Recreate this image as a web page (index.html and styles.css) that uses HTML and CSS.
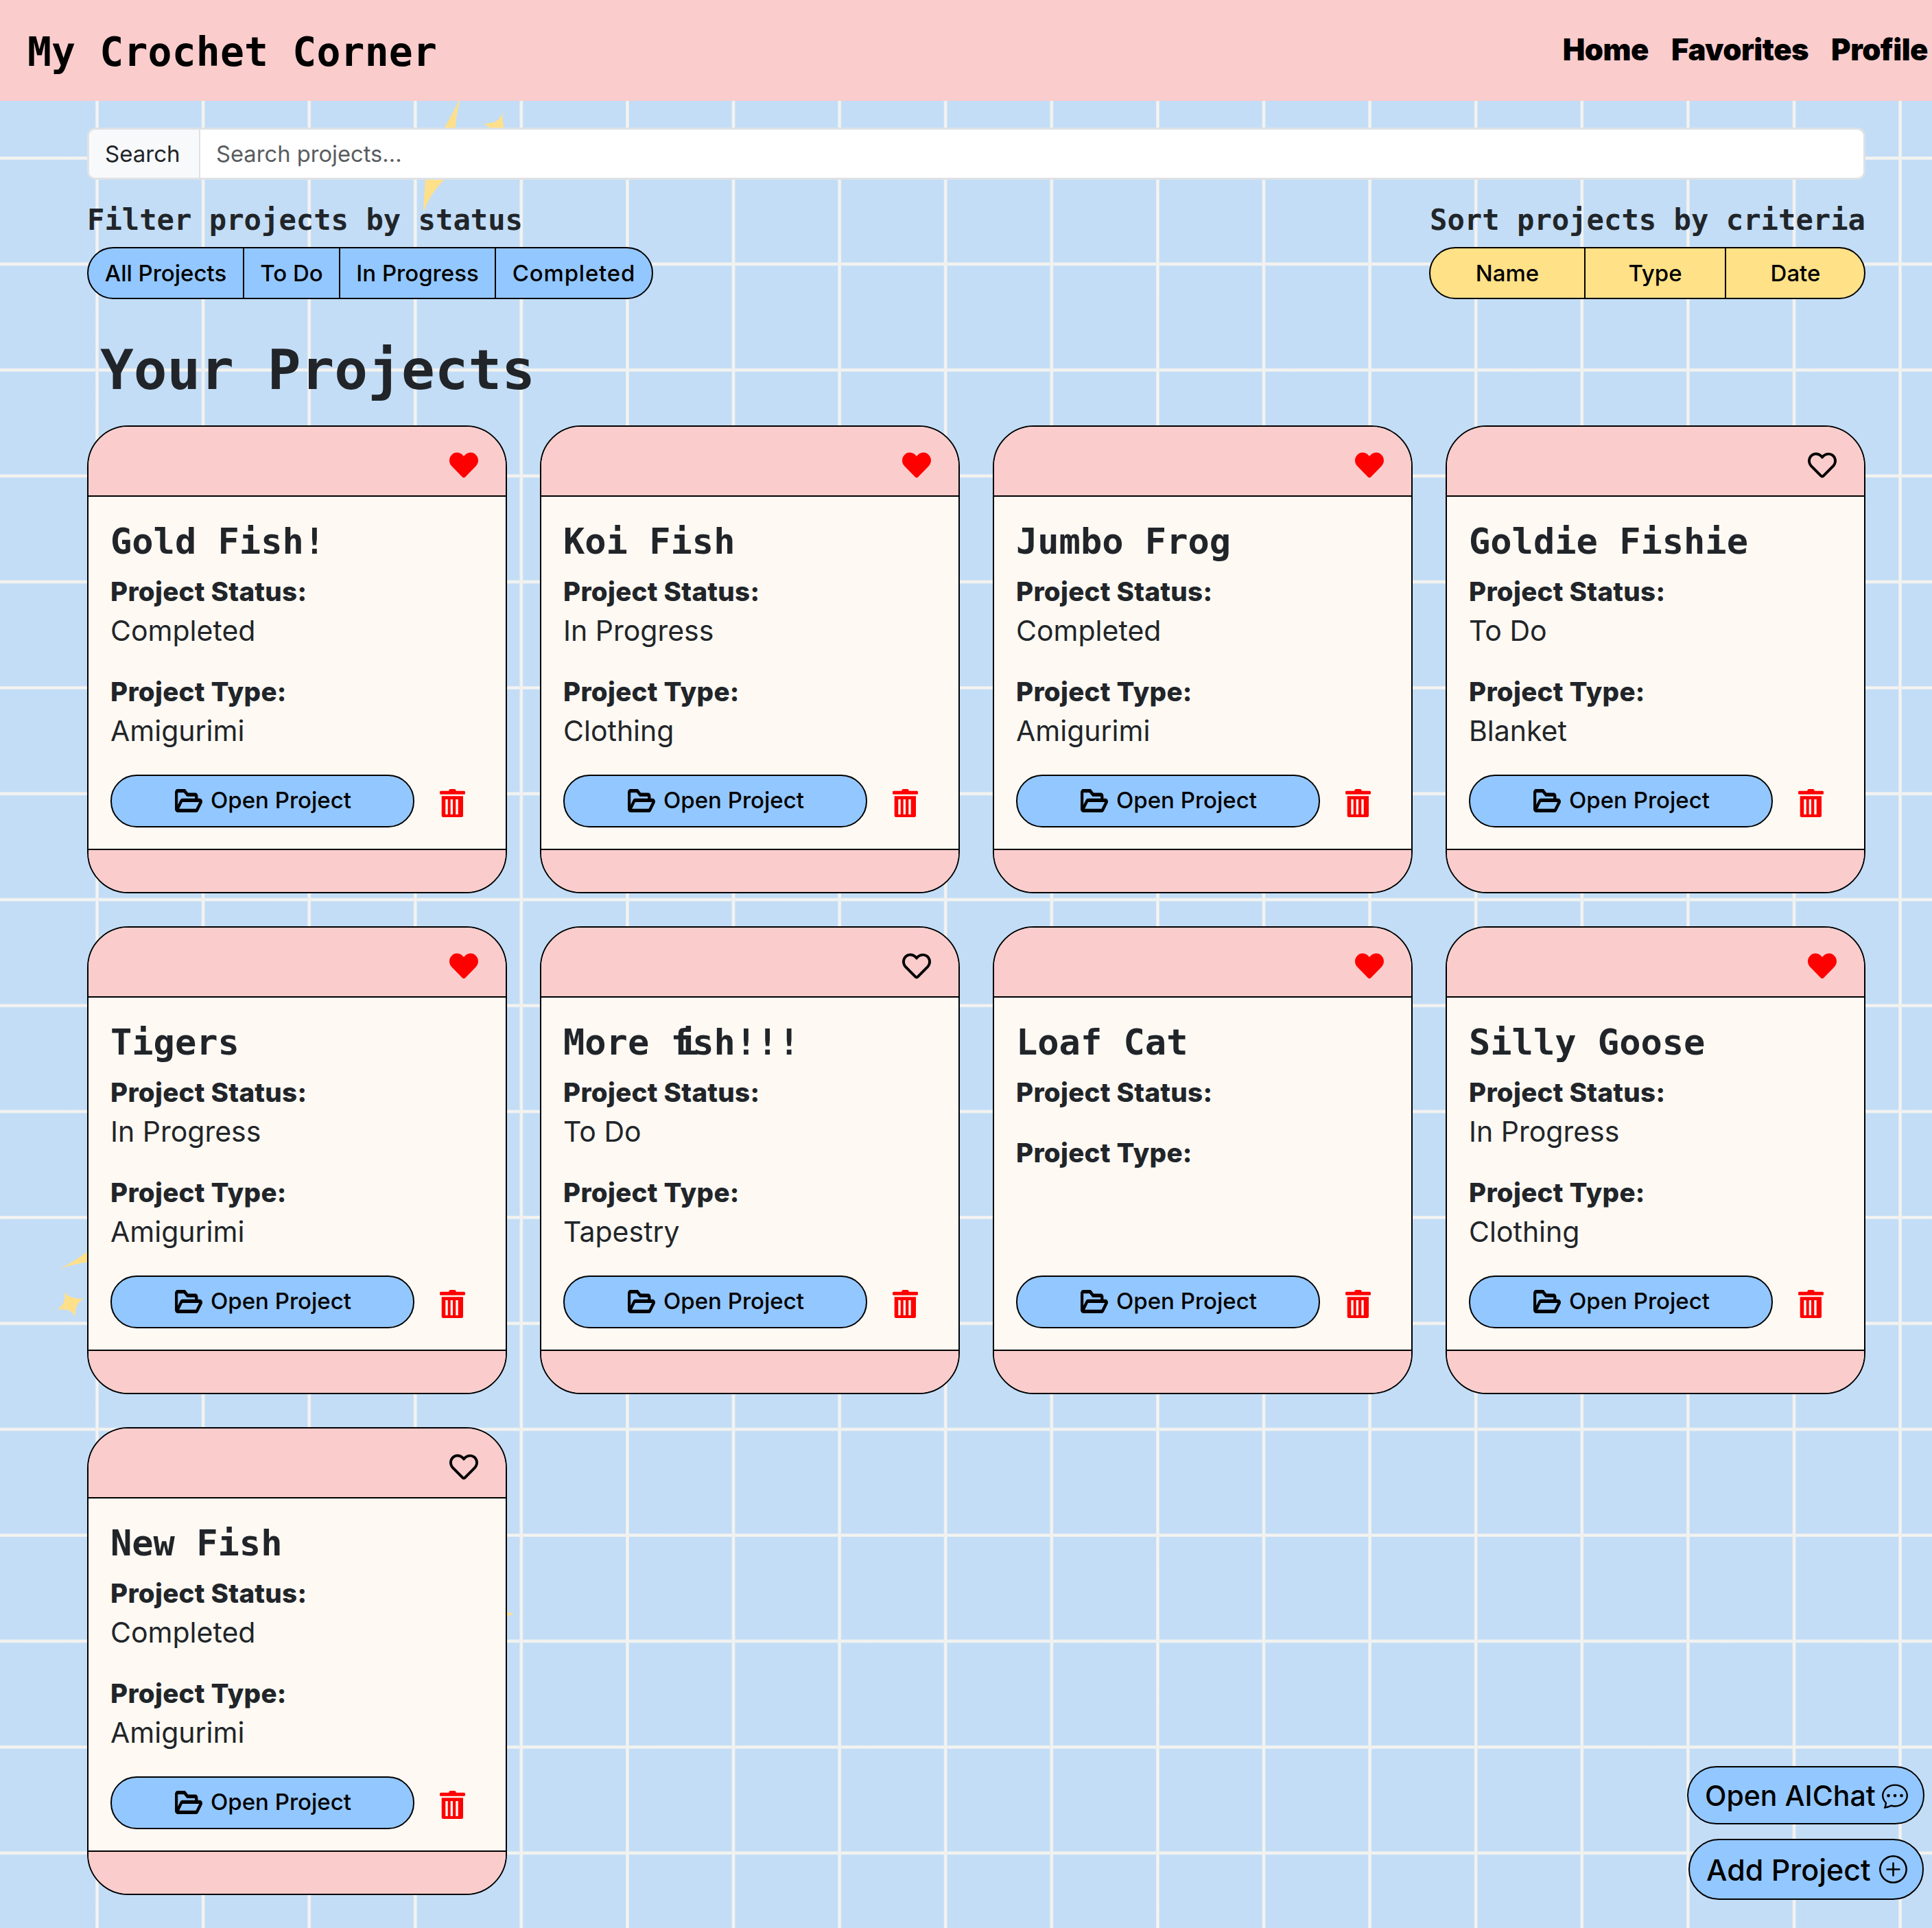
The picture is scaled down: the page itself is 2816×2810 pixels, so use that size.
FILE: index.html
```html
<!DOCTYPE html>
<html lang="en">
<head>
<meta charset="utf-8">
<title>My Crochet Corner</title>
<link rel="stylesheet" href="styles.css">
</head>
<body>
<svg class="sprites" width="0" height="0" aria-hidden="true">
  <symbol id="heart-fill" viewBox="0 0 512 512"><path d="M462.3 62.6C407.5 15.9 326 24.3 275.7 76.2L256 96.5l-19.7-20.3C186.1 24.3 104.5 15.9 49.7 62.6c-62.8 53.6-66.1 149.8-9.9 207.9l193.5 199.8c12.5 12.9 32.8 12.9 45.3 0l193.5-199.8c56.3-58.1 53-154.3-9.8-207.9z"/></symbol>
  <symbol id="heart-line" viewBox="0 0 512 512"><path d="M458.4 64.3C400.6 15.7 311.3 23 256 79.3 200.7 23 111.4 15.6 53.6 64.3-21.6 127.6-10.6 230.8 43 285.5l175.4 178.7c10 10.2 23.4 15.9 37.6 15.9 14.3 0 27.6-5.6 37.6-15.8L469 285.6c53.5-54.7 64.7-157.9-10.6-221.3zm-23.6 187.5L259.4 430.5c-2.4 2.4-4.4 2.4-6.8 0L77.2 251.8c-36.5-37.2-43.9-107.6 7.3-150.7 38.9-32.7 98.9-27.8 136.5 10.5l35 35.7 35-35.7c37.8-38.5 97.8-43.2 136.5-10.6 51.1 43.1 43.5 113.9 7.3 150.8z"/></symbol>
  <symbol id="trash" viewBox="0 0 37 41"><path fill-rule="evenodd" d="M13 2.7 14 .8Q14.4 0 15.5 0h6q1.100 0 1.500.8l1 1.900H35.500Q37 2.700 37 4.200V6.200Q37 7.700 35.500 7.700H1.500Q0 7.700 0 6.200V4.200Q0 2.700 1.500 2.700ZM2.700 10.300H34V38.500Q34 41 31.500 41H5.200Q2.700 41 2.700 38.500ZM8.300 15V37H11.700V15ZM15.700 15V37H19V15ZM23.300 15V37H26.700V15Z"/></symbol>
  <symbol id="folder" viewBox="-8 56 592 400" preserveAspectRatio="none"><path d="M527.9 224H480v-48c0-26.5-21.5-48-48-48H272l-64-64H48C21.5 64 0 85.5 0 112v288c0 26.5 21.500 48 48 48h400c16.500 0 31.900-8.500 40.700-22.600l79.900-128c20-31.900-3-73.400-40.700-73.400zM48 118c0-3.300 2.700-6 6-6h134.100l64 64H426c3.300 0 6 2.700 6 6v42H152c-16.800 0-32.400 8.800-41.100 23.200L48 351.400zm400 282H72l77.200-128H528z"/></symbol>
</svg>

<svg class="stars" viewBox="0 0 2816 2810" aria-hidden="true">
  <path d="M672 140 Q664 170 664 186 L647 262 Q625 285 617 310 Q618 285 620 262 L648 186 Q660 165 672 140Z"/>
  <path d="M733 163 Q728 181 705 180 Q712 184 716 190 L736 190 Q731 176 733 163Z"/>
  <path d="M87 1849 Q110 1838 130 1822 L130 1839 Q105 1843 87 1849Z"/>
  <path d="M94 1883 Q100 1893 122 1893 Q108 1900 110 1920 Q104 1905 83 1909 Q97 1900 94 1883Z"/>
  <path d="M739 2349 L749 2353 L739 2355Z"/>
</svg>

<header class="topbar">
  <div class="brand">My Crochet Corner</div>
  <nav class="nav">
    <a class="nav-link">Home</a>
    <a class="nav-link">Favorites</a>
    <a class="nav-link">Profile</a>
  </nav>
</header>

<main class="page">
  <div class="search">
    <span class="search-label">Search</span>
    <span class="search-input">Search projects...</span>
  </div>

  <div class="controls">
    <section class="control">
      <h5 class="control-title">Filter projects by status</h5>
      <div class="btn-group btn-group-blue">
        <button class="seg">All Projects</button>
        <button class="seg">To Do</button>
        <button class="seg">In Progress</button>
        <button class="seg seg-long">Completed</button>
      </div>
    </section>
    <section class="control">
      <h5 class="control-title">Sort projects by criteria</h5>
      <div class="btn-group btn-group-yellow">
        <button class="seg">Name</button>
        <button class="seg">Type</button>
        <button class="seg">Date</button>
      </div>
    </section>
  </div>

  <h1 class="section-title">Your Projects</h1>

  <div class="grid">
    <article class="card">
      <div class="card-top"><svg class="heart heart-on"><use href="#heart-fill"/></svg></div>
      <div class="card-body">
        <h3 class="card-title">Gold Fish!</h3>
        <p class="field"><b class="field-label">Project Status:</b><span class="field-value">Completed</span></p>
        <p class="field"><b class="field-label">Project Type:</b><span class="field-value">Amigurimi</span></p>
        <div class="actions"><button class="open"><svg class="folder"><use href="#folder"/></svg><span class="open-text">Open Project</span></button><svg class="trash"><use href="#trash"/></svg></div>
      </div>
      <div class="card-bottom"></div>
    </article>
    <article class="card">
      <div class="card-top"><svg class="heart heart-on"><use href="#heart-fill"/></svg></div>
      <div class="card-body">
        <h3 class="card-title">Koi Fish</h3>
        <p class="field"><b class="field-label">Project Status:</b><span class="field-value">In Progress</span></p>
        <p class="field"><b class="field-label">Project Type:</b><span class="field-value">Clothing</span></p>
        <div class="actions"><button class="open"><svg class="folder"><use href="#folder"/></svg><span class="open-text">Open Project</span></button><svg class="trash"><use href="#trash"/></svg></div>
      </div>
      <div class="card-bottom"></div>
    </article>
    <article class="card">
      <div class="card-top"><svg class="heart heart-on"><use href="#heart-fill"/></svg></div>
      <div class="card-body">
        <h3 class="card-title">Jumbo Frog</h3>
        <p class="field"><b class="field-label">Project Status:</b><span class="field-value">Completed</span></p>
        <p class="field"><b class="field-label">Project Type:</b><span class="field-value">Amigurimi</span></p>
        <div class="actions"><button class="open"><svg class="folder"><use href="#folder"/></svg><span class="open-text">Open Project</span></button><svg class="trash"><use href="#trash"/></svg></div>
      </div>
      <div class="card-bottom"></div>
    </article>
    <article class="card">
      <div class="card-top"><svg class="heart"><use href="#heart-line"/></svg></div>
      <div class="card-body">
        <h3 class="card-title">Goldie Fishie</h3>
        <p class="field"><b class="field-label">Project Status:</b><span class="field-value">To Do</span></p>
        <p class="field"><b class="field-label">Project Type:</b><span class="field-value">Blanket</span></p>
        <div class="actions"><button class="open"><svg class="folder"><use href="#folder"/></svg><span class="open-text">Open Project</span></button><svg class="trash"><use href="#trash"/></svg></div>
      </div>
      <div class="card-bottom"></div>
    </article>
    <article class="card">
      <div class="card-top"><svg class="heart heart-on"><use href="#heart-fill"/></svg></div>
      <div class="card-body">
        <h3 class="card-title">Tigers</h3>
        <p class="field"><b class="field-label">Project Status:</b><span class="field-value">In Progress</span></p>
        <p class="field"><b class="field-label">Project Type:</b><span class="field-value">Amigurimi</span></p>
        <div class="actions"><button class="open"><svg class="folder"><use href="#folder"/></svg><span class="open-text">Open Project</span></button><svg class="trash"><use href="#trash"/></svg></div>
      </div>
      <div class="card-bottom"></div>
    </article>
    <article class="card">
      <div class="card-top"><svg class="heart"><use href="#heart-line"/></svg></div>
      <div class="card-body">
        <h3 class="card-title">More <span class="lig-f">f</span><span class="lig-i">i</span>sh!!!</h3>
        <p class="field"><b class="field-label">Project Status:</b><span class="field-value">To Do</span></p>
        <p class="field"><b class="field-label">Project Type:</b><span class="field-value">Tapestry</span></p>
        <div class="actions"><button class="open"><svg class="folder"><use href="#folder"/></svg><span class="open-text">Open Project</span></button><svg class="trash"><use href="#trash"/></svg></div>
      </div>
      <div class="card-bottom"></div>
    </article>
    <article class="card">
      <div class="card-top"><svg class="heart heart-on"><use href="#heart-fill"/></svg></div>
      <div class="card-body">
        <h3 class="card-title">Loaf Cat</h3>
        <p class="field"><b class="field-label">Project Status:</b></p>
        <p class="field"><b class="field-label">Project Type:</b></p>
        <div class="actions"><button class="open"><svg class="folder"><use href="#folder"/></svg><span class="open-text">Open Project</span></button><svg class="trash"><use href="#trash"/></svg></div>
      </div>
      <div class="card-bottom"></div>
    </article>
    <article class="card">
      <div class="card-top"><svg class="heart heart-on"><use href="#heart-fill"/></svg></div>
      <div class="card-body">
        <h3 class="card-title">Silly Goose</h3>
        <p class="field"><b class="field-label">Project Status:</b><span class="field-value">In Progress</span></p>
        <p class="field"><b class="field-label">Project Type:</b><span class="field-value">Clothing</span></p>
        <div class="actions"><button class="open"><svg class="folder"><use href="#folder"/></svg><span class="open-text">Open Project</span></button><svg class="trash"><use href="#trash"/></svg></div>
      </div>
      <div class="card-bottom"></div>
    </article>
    <article class="card">
      <div class="card-top"><svg class="heart"><use href="#heart-line"/></svg></div>
      <div class="card-body">
        <h3 class="card-title">New Fish</h3>
        <p class="field"><b class="field-label">Project Status:</b><span class="field-value">Completed</span></p>
        <p class="field"><b class="field-label">Project Type:</b><span class="field-value">Amigurimi</span></p>
        <div class="actions"><button class="open"><svg class="folder"><use href="#folder"/></svg><span class="open-text">Open Project</span></button><svg class="trash"><use href="#trash"/></svg></div>
      </div>
      <div class="card-bottom"></div>
    </article>
  </div>
</main>

<div class="floaters">
  <button class="float float-chat">Open AIChat
    <svg class="float-icon-chat" viewBox="0 0 16 16"><path d="M5 8a1 1 0 1 1-2 0 1 1 0 0 1 2 0zm4 0a1 1 0 1 1-2 0 1 1 0 0 1 2 0zm3 1a1 1 0 1 0 0-2 1 1 0 0 0 0 2z"/><path d="m2.165 15.803.02-.004c1.83-.363 2.948-.842 3.468-1.105A9.06 9.06 0 0 0 8 15c4.418 0 8-3.134 8-7s-3.582-7-8-7-8 3.134-8 7c0 1.76.743 3.37 1.97 4.6a10.437 10.437 0 0 1-.524 2.318l-.003.011a10.722 10.722 0 0 1-.244.637c-.079.186.074.394.273.362a21.673 21.673 0 0 0 .693-.125zm.8-3.108a1 1 0 0 0-.287-.801C1.618 10.83 1 9.468 1 8c0-3.192 3.004-6 7-6s7 2.808 7 6c0 3.193-3.004 6-7 6a8.06 8.06 0 0 1-2.088-.272 1 1 0 0 0-.711.074c-.387.196-1.24.57-2.634.893a10.97 10.97 0 0 0 .398-2z"/></svg>
  </button>
  <button class="float float-add">Add Project
    <svg class="float-icon-add" viewBox="0 0 16 16"><path d="M8 15A7 7 0 1 1 8 1a7 7 0 0 1 0 14zm0 1A8 8 0 1 0 8 0a8 8 0 0 0 0 16z"/><path d="M8 4a.5.5 0 0 1 .5.5v3h3a.5.5 0 0 1 0 1h-3v3a.5.5 0 0 1-1 0v-3h-3a.5.5 0 0 1 0-1h3v-3A.5.5 0 0 1 8 4z"/></svg>
  </button>
</div>
</body>
</html>
```

FILE: styles.css
```css
* { box-sizing: border-box; }

html, body { margin: 0; padding: 0; }

body {
  position: relative;
  width: 2816px;
  height: 2810px;
  overflow: hidden;
  font-family: "Inter", "Liberation Sans", sans-serif;
  color: #212529;
  background-color: #c3ddf6;
  background-image:
    linear-gradient(to right, #dbe7f3 0, #f4f3f0 1px, #f4f3f0 4px, #dbe7f3 5px, transparent 5px),
    linear-gradient(to bottom, #dbe7f3 0, #f4f3f0 1px, #f4f3f0 4px, #dbe7f3 5px, transparent 5px);
  background-size: 154.6px 154.4px;
  background-position: 139px 228px;
}

.sprites { position: absolute; }

.stars {
  position: absolute;
  top: 0;
  left: 0;
  width: 2816px;
  height: 2810px;
  fill: #ffe08a;
}

.topbar {
  position: relative;
  height: 147px;
  display: flex;
  align-items: center;
  justify-content: space-between;
  padding: 0 6px 0 40px;
  background: #facccc;
}

.brand {
  margin-top: 4px;
  font-family: "DejaVu Sans Mono", monospace;
  font-weight: 700;
  font-size: 58px;
  line-height: 1;
  color: #000;
  letter-spacing: 0.2px;
}

.nav { display: flex; gap: 33px; margin-top: -4px; }

.nav-link {
  font-weight: 900;
  font-size: 43.5px;
  letter-spacing: -0.5px;
  color: #000;
}

.page {
  position: relative;
  padding: 39px 97px 0 127px;
}

.search {
  display: flex;
  height: 76px;
  border: 3px solid #dee2e6;
  border-radius: 12px;
  background: #fff;
  font-size: 33px;
  line-height: 70px;
  overflow: hidden;
}

.search-label {
  width: 162px;
  padding-left: 23px;
  background: #f8f9fa;
  border-right: 2px solid #dee2e6;
  color: #212529;
}

.search-input { padding-left: 23px; font-size: 32.7px; color: #595c5f; }

.controls {
  display: flex;
  justify-content: space-between;
  margin-top: 34px;
}

.control-title {
  margin: 0 0 14px;
  font-family: "DejaVu Sans Mono", monospace;
  font-weight: 700;
  font-size: 42.2px;
  line-height: 50px;
}

.control:last-child .control-title { text-align: right; }

.btn-group {
  display: grid;
  height: 76px;
  border: 2px solid #000;
  border-radius: 38px;
  overflow: hidden;
}

.btn-group-blue {
  grid-template-columns: 225px 140px 227px 229px;
  width: 825px;
  background: #93c7ff;
}

.btn-group-yellow {
  grid-template-columns: 224px 205px 204px;
  width: 636px;
  margin-left: auto;
  background: #ffe187;
}

.seg {
  padding: 0;
  border: 0;
  border-left: 2px solid #000;
  background: transparent;
  color: #000;
  font-family: inherit;
  font-size: 33px;
  font-weight: 500;
}

.seg:first-child { border-left: 0; }

.seg-long { letter-spacing: 0.8px; }

.section-title {
  margin: 55px 0 0 19px;
  font-family: "DejaVu Sans Mono", monospace;
  font-weight: 700;
  font-size: 81px;
  line-height: 96px;
  color: #212529;
}

.grid {
  display: grid;
  grid-template-columns: repeat(4, 612px);
  grid-auto-rows: 682px;
  gap: 48px;
  margin-top: 33px;
}

.card {
  display: flex;
  flex-direction: column;
  border: 2px solid #000;
  border-radius: 60px;
  overflow: hidden;
  background: #fef9f3;
}

.card-top {
  display: flex;
  justify-content: flex-end;
  align-items: center;
  height: 102px;
  padding: 11px 40px 0 0;
  border-bottom: 2px solid #000;
  background: #facccc;
}

.heart { width: 42px; height: 42px; fill: #000; }
.heart-on { fill: #f00; }

.card-body {
  flex: 1;
  display: flex;
  flex-direction: column;
  padding: 35px 32px 0;
}

.card-title {
  margin: 0 0 14px;
  font-family: "DejaVu Sans Mono", monospace;
  font-weight: 700;
  font-size: 52px;
  line-height: 60px;
}

.lig-f { letter-spacing: -22px; }
.lig-i { letter-spacing: -9px; }

.field { margin: 0 0 30px; }

.field-label {
  display: block;
  font-size: 38.5px;
  letter-spacing: 0.3px;
  line-height: 58px;
  font-weight: 800;
}

.field-value {
  display: block;
  font-size: 41px;
  line-height: 56px;
  margin-bottom: 2px;
}

.actions {
  display: flex;
  align-items: center;
  margin-top: auto;
  margin-bottom: 31px;
}

.open {
  display: flex;
  align-items: center;
  justify-content: center;
  gap: 12px;
  width: 443px;
  height: 77px;
  padding: 0 0 0 2px;
  border: 2px solid #000;
  border-radius: 38px;
  background: #93c7ff;
  color: #000;
  font-family: inherit;
  font-size: 33px;
  font-weight: 500;
}

.open-text { margin-bottom: 4px; }

.folder { width: 40px; height: 34px; margin-bottom: 1px; fill: #000; stroke: #000; stroke-width: 14px; }

.trash {
  width: 37px;
  height: 41px;
  margin: 6px 0 0 37px;
  fill: #f00;
}

.card-bottom {
  height: 63px;
  border-top: 2px solid #000;
  background: #facccc;
}

.floaters {
  position: absolute;
  right: 11px;
  bottom: 41px;
  display: flex;
  flex-direction: column;
  align-items: flex-end;
  gap: 21px;
}

.float {
  display: flex;
  align-items: center;
  border: 2px solid #000;
  border-radius: 46px;
  background: #93c7ff;
  color: #000;
  font-family: inherit;
  font-weight: 500;
  white-space: nowrap;
}

.float-chat { gap: 9px; width: 346px; height: 85px; padding: 0 24px; font-size: 41px; }
.float-add { gap: 12px; width: 343px; height: 89px; margin-right: 1px; padding: 0 24px; font-size: 43px; }

.float-icon-chat { width: 38px; height: 38px; fill: #000; flex: none; }
.float-icon-add { width: 41px; height: 41px; fill: #000; flex: none; }
```
